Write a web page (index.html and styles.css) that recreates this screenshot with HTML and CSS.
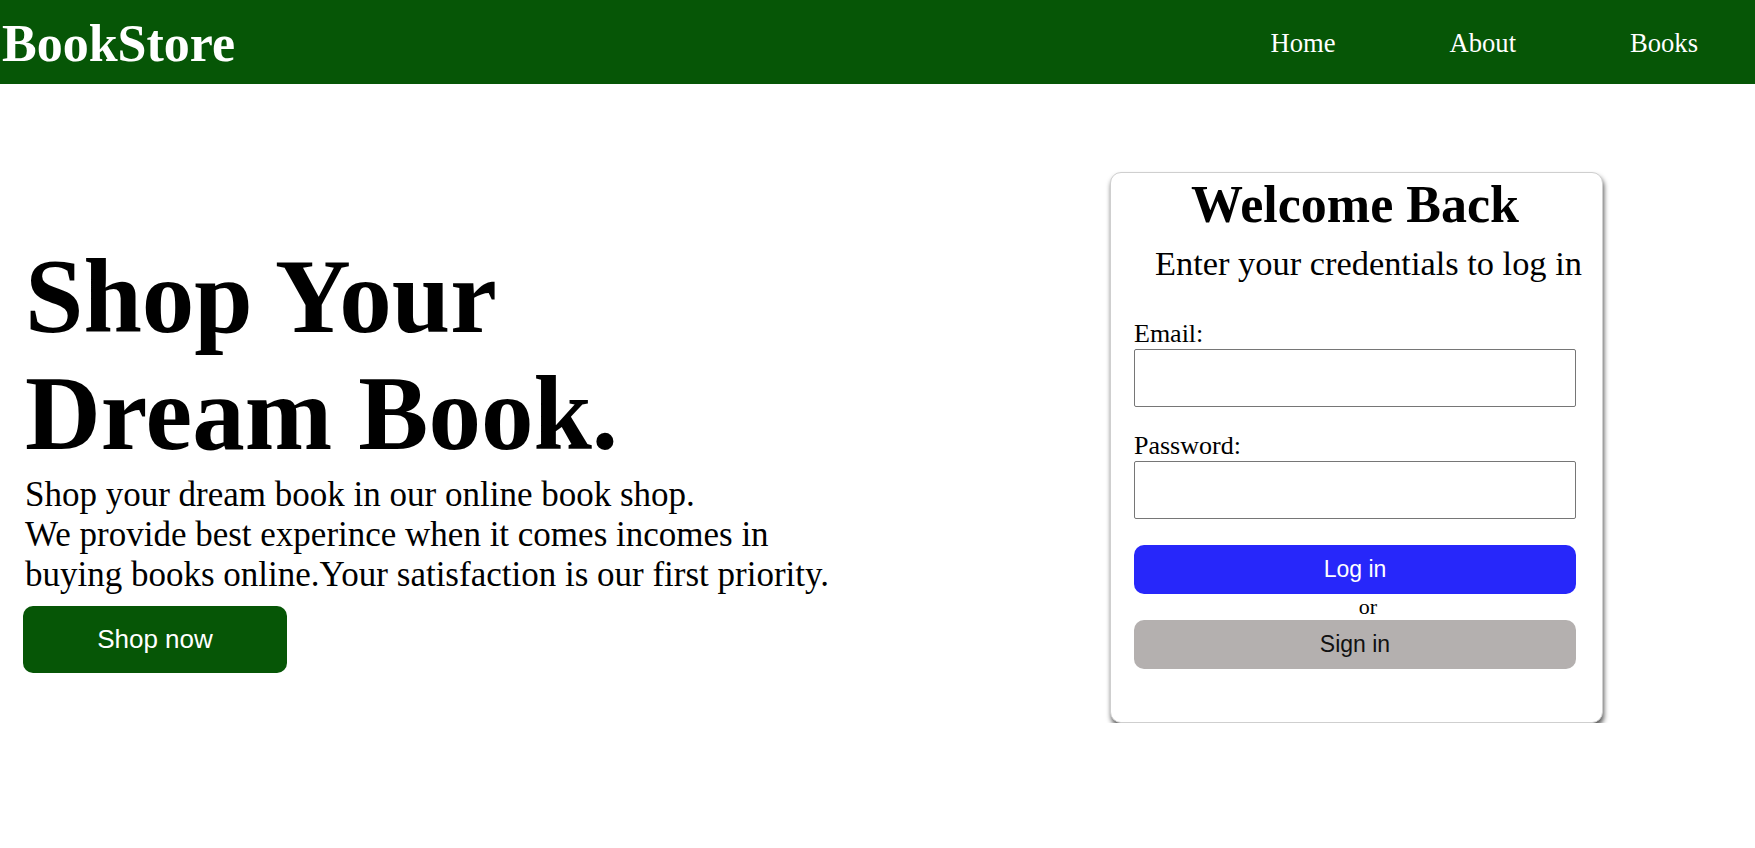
FILE: index.html
```html
<!DOCTYPE html>
<html lang="en">
<head>
<meta charset="utf-8">
<title>BookStore</title>
<link rel="stylesheet" href="styles.css">
</head>
<body>
<header class="navbar">
  <div class="brand">BookStore</div>
  <nav class="nav-links">
    <a class="nav-link" href="#">Home</a>
    <a class="nav-link" href="#">About</a>
    <a class="nav-link" href="#">Books</a>
  </nav>
</header>
<main class="main">
  <section class="hero">
    <h1 class="hero-title">Shop Your<br>Dream Book.</h1>
    <p class="hero-text">Shop your dream book in our online book shop.<br>We provide best experince when it comes incomes in<br>buying books online.Your satisfaction is our first priority.</p>
    <button class="shop-btn" type="button">Shop now</button>
  </section>
  <section class="card">
    <h2 class="card-title">Welcome Back</h2>
    <p class="card-sub">Enter your credentials to log in</p>
    <form class="form">
      <label class="label label-first" for="email">Email:</label>
      <input class="input" id="email" type="email">
      <label class="label" for="pw">Password:</label>
      <input class="input" id="pw" type="password">
      <button class="btn btn-login" type="button">Log in</button>
      <div class="or">or</div>
      <button class="btn btn-sign" type="button">Sign in</button>
    </form>
  </section>
</main>
</body>
</html>
```
FILE: styles.css
```css
html, body {
  margin: 0;
  padding: 0;
  background: #ffffff;
  font-family: "Liberation Serif", "Times New Roman", serif;
  color: #000;
}

.navbar {
  height: 84px;
  background: #065606;
  display: flex;
  align-items: center;
  justify-content: space-between;
}

.brand {
  color: #fff;
  font-weight: bold;
  font-size: 52px;
  padding-left: 2px;
  padding-top: 3px;
}

.nav-links {
  display: flex;
  align-items: center;
  padding-top: 2px;
}

.nav-link {
  color: #fff;
  text-decoration: none;
  font-size: 26.6px;
  padding: 0 57px;
}

.main {
  display: flex;
  justify-content: space-between;
  align-items: flex-start;
  padding: 0 152px 0 25px;
}

.hero {
  margin-top: 154px;
}

.hero-title {
  margin: 0;
  font-size: 105px;
  line-height: 117px;
  font-weight: bold;
}

.hero-text {
  margin: 3px 0 10px;
  font-size: 35px;
  line-height: 40.2px;
  white-space: nowrap;
}

.shop-btn {
  display: block;
  width: 264px;
  height: 67px;
  margin-left: -2px;
  background: #065606;
  color: #fff;
  border: none;
  border-radius: 10px;
  font-family: "Liberation Sans", Arial, sans-serif;
  font-size: 26px;
}

.card {
  margin-top: 88px;
  width: 493px;
  box-sizing: border-box;
  border: 1px solid #cfcfcf;
  border-radius: 11px;
  box-shadow: 1px 4px 5px rgba(0, 0, 0, 0.65);
  padding: 2px 26px 53px 23px;
  background: #fff;
}

.card-title {
  margin: 0;
  text-align: center;
  font-size: 52px;
  line-height: 60px;
  font-weight: bold;
}

.card-sub {
  margin: 8px 0 0;
  padding-left: 21px;
  text-align: left;
  white-space: nowrap;
  font-size: 34.4px;
  line-height: 40px;
}

.form {
  display: flex;
  flex-direction: column;
}

.label {
  font-size: 26px;
  line-height: 30px;
  margin-top: 24px;
}

.label-first {
  margin-top: 36px;
}

.input {
  box-sizing: border-box;
  width: 100%;
  height: 58px;
  border: 1px solid #767676;
  border-radius: 2px;
  margin: 0;
}

.btn {
  box-sizing: border-box;
  width: 100%;
  height: 49px;
  border: none;
  border-radius: 10px;
  font-family: "Liberation Sans", Arial, sans-serif;
  font-size: 23px;
}

.btn-login {
  margin-top: 26px;
  background: #2727fa;
  color: #fff;
}

.or {
  text-align: center;
  padding-left: 26px;
  font-size: 22px;
  line-height: 26px;
}

.btn-sign {
  margin-top: 0;
  background: #b4b0af;
  color: #111;
}
```
